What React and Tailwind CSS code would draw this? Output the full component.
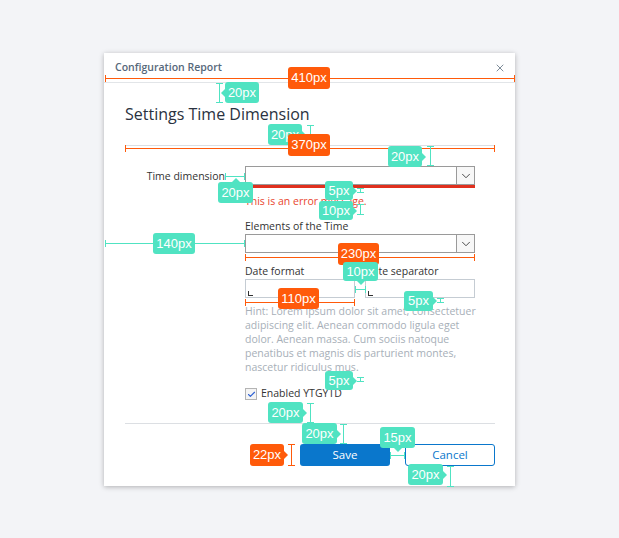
import React from 'react';
import { X, ChevronDown, Check } from 'lucide-react';

const TEAL = '#50e3c2';
const ORANGE = '#ff5a0a';

// measurement overlays: [x, y, w, h, text, color, pointer]
const badges = [
  [288, 67, 42, 22, '410px', ORANGE, null],
  [225, 82, 34, 21, '20px', TEAL, 'left'],
  [268, 124, 34, 21, '20px', TEAL, 'right'],
  [288, 134, 42, 22, '370px', ORANGE, null],
  [388, 146, 34, 21, '20px', TEAL, 'right'],
  [218, 182, 35, 21, '20px', TEAL, 'up'],
  [325, 181, 28, 19, '5px', TEAL, 'right'],
  [319, 201, 34, 19, '10px', TEAL, 'right'],
  [153, 233, 42, 21, '140px', TEAL, null],
  [338, 243, 41, 22, '230px', ORANGE, null],
  [343, 262, 35, 19, '10px', TEAL, 'down'],
  [278, 288, 41, 21, '110px', ORANGE, null],
  [404, 291, 29, 20, '5px', TEAL, 'right'],
  [325, 371, 28, 19, '5px', TEAL, 'right'],
  [268, 402, 35, 21, '20px', TEAL, 'right'],
  [302, 423, 35, 21, '20px', TEAL, 'right'],
  [380, 427, 35, 21, '15px', TEAL, 'down'],
  [250, 444, 34, 22, '22px', ORANGE, 'right'],
  [408, 464, 35, 21, '20px', TEAL, 'right'],
];

// [orientation, fixed, from, to, color]
const lines = [
  ['h', 78, 105, 515, ORANGE],
  ['v', 219, 83, 103, TEAL],
  ['v', 310, 125, 145, TEAL],
  ['h', 148, 125, 495, ORANGE],
  ['v', 430, 146, 166, TEAL],
  ['h', 176, 225, 245, TEAL],
  ['v', 360, 188, 193, TEAL],
  ['v', 360, 204, 215, TEAL],
  ['h', 243, 105, 245, TEAL],
  ['h', 257, 245, 475, ORANGE],
  ['h', 289, 355, 366, TEAL],
  ['h', 302, 245, 355, ORANGE],
  ['v', 440, 298, 303, TEAL],
  ['v', 360, 377, 382, TEAL],
  ['v', 310, 403, 423, TEAL],
  ['v', 343, 424, 444, TEAL],
  ['h', 455, 390, 405, TEAL],
  ['v', 291, 444, 466, ORANGE],
  ['v', 450, 466, 487, TEAL],
];

const hint = [
  'Hint: Lorem ipsum dolor sit amet, consectetuer',
  'adipiscing elit. Aenean commodo ligula eget',
  'dolor. Aenean massa. Cum sociis natoque',
  'penatibus et magnis dis parturient montes,',
  'nascetur ridiculus mus.',
];

const Badge = ({ b }) => {
  const [x, y, w, h, text, color, pointer] = b;
  return (
    <div
      className="absolute flex items-center justify-center rounded-[3px] text-[13px] text-white font-['Liberation_Sans',sans-serif]"
      style={{ left: x, top: y, width: w, height: h, background: color }}
    >
      {text}
      {pointer === 'left' && (
        <span className="absolute left-[-4px] top-1/2 -translate-y-1/2 border-y-[4px] border-r-[4px] border-y-transparent" style={{ borderRightColor: color }} />
      )}
      {pointer === 'right' && (
        <span className="absolute right-[-4px] top-1/2 -translate-y-1/2 border-y-[4px] border-l-[4px] border-y-transparent" style={{ borderLeftColor: color }} />
      )}
      {pointer === 'up' && (
        <span className="absolute top-[-4px] left-1/2 -translate-x-1/2 border-x-[4px] border-b-[4px] border-x-transparent" style={{ borderBottomColor: color }} />
      )}
      {pointer === 'down' && (
        <span className="absolute bottom-[-4px] left-1/2 -translate-x-1/2 border-x-[4px] border-t-[4px] border-x-transparent" style={{ borderTopColor: color }} />
      )}
    </div>
  );
};

const Line = ({ l }) => {
  const [o, fixed, from, to, color] = l;
  if (o === 'h') {
    return (
      <div className="absolute" style={{ left: from, top: fixed - 3, width: to - from, height: 7 }}>
        <div className="absolute left-0 right-0 top-[3px] h-px" style={{ background: color }} />
        <div className="absolute left-0 top-0 h-[7px] w-px" style={{ background: color }} />
        <div className="absolute right-0 top-0 h-[7px] w-px" style={{ background: color }} />
      </div>
    );
  }
  return (
    <div className="absolute" style={{ left: fixed - 3, top: from, width: 7, height: to - from }}>
      <div className="absolute top-0 bottom-0 left-[3px] w-px" style={{ background: color }} />
      <div className="absolute top-0 left-0 w-[7px] h-px" style={{ background: color }} />
      <div className="absolute bottom-0 left-0 w-[7px] h-px" style={{ background: color }} />
    </div>
  );
};

const Select = () => (
  <div className="flex h-[19px] w-[230px] border border-[#9a9a9a] bg-white">
    <div className="flex-1" />
    <div className="flex w-[18px] items-center justify-center border-l border-[#9a9a9a] bg-[#f7f7f7]">
      <ChevronDown size={14} strokeWidth={1.5} color="#333" />
    </div>
  </div>
);

const TextInput = () => (
  <div className="relative h-[19px] w-[110px] border border-[#c5ccd3] bg-white">
    <span className="absolute left-[2px] bottom-[1px] h-[5px] w-[5px] border-l border-b border-[#333]" />
  </div>
);

export default function App() {
  return (
    <div className="relative min-h-[538px] bg-[#f3f4f7] pt-[53px] pl-[104px] font-['Open_Sans',sans-serif]">
      <div className="w-[411px] bg-white shadow-[0_1px_5px_rgba(0,0,0,0.28)]">
        <div className="flex h-[30px] items-center justify-between border-b border-[#e2e5e8] pl-[11px] pr-[9px]">
          <span className="text-[10.5px] font-semibold text-[#56687a]">Configuration Report</span>
          <X size={12} strokeWidth={1.75} color="#6b7c8a" />
        </div>

        <div className="pl-[21px] pr-[20px] pb-[20px]">
          <h1 className="mt-[20px] text-[16px] leading-[22px] text-[#2a3240]">Settings Time Dimension</h1>
          <div className="mt-[20px] h-px bg-[#dcdfe3]" />

          <div className="mt-[20px] flex">
            <div className="mr-[20px] w-[100px] pt-[3px] text-right text-[10.5px] leading-[14px] text-[#333]">Time dimension</div>
            <div>
              <Select />
              <div className="h-[3px] w-[230px] bg-[#e0301e]" />
              <div className="mt-[5px] text-[10.5px] leading-[16px] text-[#e8452e]">This is an error message.</div>
            </div>
          </div>

          <div className="ml-[120px] w-[230px]">
            <div className="mt-[10px] text-[10.5px] leading-[14px] text-[#333]">Elements of the Time</div>
            <div className="mt-px">
              <Select />
            </div>

            <div className="mt-[11px] flex gap-[10px]">
              <div>
                <div className="text-[10.5px] leading-[14px] text-[#333]">Date format</div>
                <div className="mt-px"><TextInput /></div>
              </div>
              <div>
                <div className="text-[10.5px] leading-[14px] text-[#333]">Date separator</div>
                <div className="mt-px"><TextInput /></div>
              </div>
            </div>

            <p className="mt-[6px] text-[10.5px] leading-[14px] text-[#a7afb8]">
              {hint.map((t) => (
                <span key={t} className="block whitespace-nowrap">{t}</span>
              ))}
            </p>

            <div className="mt-[13px] flex h-[14px] items-center gap-[4px]">
              <div className="flex h-[12px] w-[12px] items-center justify-center border border-[#b4b4b4] bg-[#f4f4f4]">
                <Check size={9} strokeWidth={3} color="#2f62d4" />
              </div>
              <span className="text-[10.5px] text-[#333]">Enabled YTGYTD</span>
            </div>
          </div>

          <div className="mt-[22px] h-px bg-[#dcdfe3]" />

          <div className="mt-[20px] flex justify-end gap-[15px]">
            <button className="h-[22px] w-[90px] rounded-[3px] bg-[#0a77cc] text-[11.5px] text-white">Save</button>
            <button className="h-[22px] w-[90px] rounded-[3px] border border-[#0a77cc] bg-white text-[11.5px] text-[#0a77cc]">Cancel</button>
          </div>
        </div>
      </div>

      {lines.map((l, i) => <Line key={'l' + i} l={l} />)}
      {badges.map((b, i) => <Badge key={'b' + i} b={b} />)}
    </div>
  );
}
